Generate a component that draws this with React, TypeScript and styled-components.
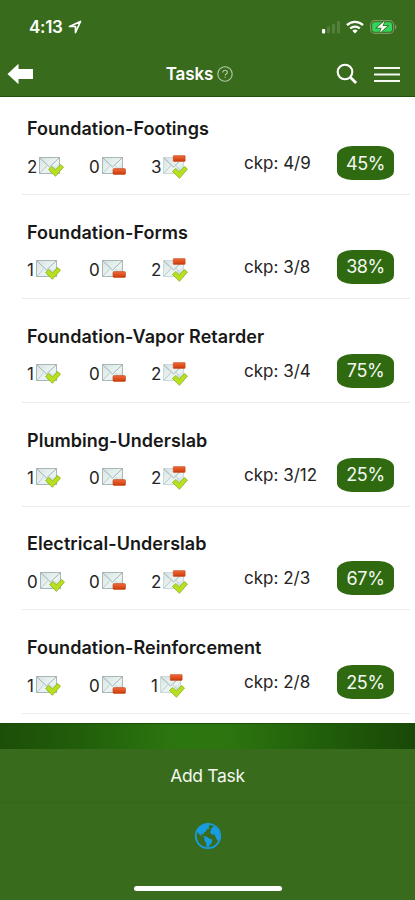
import React from "react";
import styled, { createGlobalStyle } from "styled-components";

const Global = createGlobalStyle`
  * { box-sizing: border-box; }
  body { margin: 0; background: #396b1c; font-family: Inter, "Liberation Sans", sans-serif; }
`;

const Screen = styled.div`
  width: 415px;
  height: 900px;
  display: flex;
  flex-direction: column;
  overflow: hidden;
  background: #396b1c;
`;

const Header = styled.header`
  height: 97px;
  flex: none;
  color: #fff;
  border-bottom: 1px solid #1f5408;
`;

const StatusBar = styled.div`
  height: 52px;
  padding: 2px 18px 0 29px;
  display: flex;
  align-items: center;
  justify-content: space-between;
`;

const Clock = styled.div`
  display: flex;
  align-items: center;
  gap: 5px;
  font-size: 17px;
  font-weight: 600;
  letter-spacing: -0.3px;
`;

const Signals = styled.div`
  display: flex;
  align-items: center;
  gap: 6px;
  svg { display: block; }
`;

const NavBar = styled.nav`
  height: 44px;
  padding: 0 15px 0 7px;
  display: grid;
  grid-template-columns: 64px 1fr 64px;
  align-items: center;
  svg { display: block; }
`;

const NavTitle = styled.h1`
  margin: 0;
  padding-right: 8px;
  display: flex;
  align-items: center;
  justify-content: center;
  gap: 4px;
  font-size: 17px;
  line-height: 22px;
  font-weight: 600;
  letter-spacing: -0.1px;
`;

const NavActions = styled.div`
  display: flex;
  align-items: center;
  justify-content: space-between;
`;

const TaskList = styled.main`
  flex: none;
  height: 626px;
  background: #fff;
`;

const TaskRow = styled.section`
  height: 103.85px;
  margin-left: 22px;
  margin-right: 5px;
  padding: 0 0 13px 5px;
  display: flex;
  flex-direction: column;
  justify-content: flex-end;
  border-bottom: 1px solid #ececec;
  color: #181818;
  &:first-child { height: 98px; }
`;

const TaskTitle = styled.h2`
  margin: 0 0 4px;
  font-size: 18px;
  line-height: 24px;
  font-weight: 600;
  letter-spacing: 0.04px;
  white-space: nowrap;
`;

const Stats = styled.div`
  height: 36px;
  display: grid;
  grid-template-columns: 62px 62px 93px 93px 57px;
  align-items: center;
`;

const Count = styled.div`
  display: flex;
  align-items: center;
  padding-top: 7px;
  font-size: 17px;
  line-height: 24px;
  letter-spacing: -0.2px;
  color: #242424;
  svg { display: block; margin-left: 1px; flex: none; }
`;

const Checkpoints = styled.div`
  font-size: 17px;
  line-height: 24px;
  letter-spacing: 0;
  white-space: nowrap;
  color: #242424;
`;

const Percent = styled.div`
  height: 34px;
  border-radius: 15px / 9px;
  background: #2f6a11;
  color: #f4f8f1;
  display: flex;
  align-items: center;
  justify-content: center;
  font-size: 18px;
  letter-spacing: -0.4px;
`;

const Backdrop = styled.div`
  height: 26px;
  flex: none;
  background: linear-gradient(90deg, #1c4e08 0%, #215d0a 18%, #2c760f 42%, #2c750f 55%, #205c0a 80%, #194807 100%);
  border-top: 1px solid #194d08;
`;

const Footer = styled.footer`
  flex: 1;
  display: flex;
  flex-direction: column;
  align-items: center;
  color: #fff;
`;

const AddTask = styled.button`
  width: 100%;
  height: 54px;
  padding: 0;
  border: 0;
  border-bottom: 1px solid #366719;
  background: transparent;
  color: #f4f8f1;
  font: 400 17.5px/54px Inter, "Liberation Sans", sans-serif;
  letter-spacing: -0.3px;
`;

const Globe = styled.div`
  height: 66px;
  display: flex;
  align-items: center;
`;

const HomeIndicator = styled.div`
  width: 148px;
  height: 5px;
  margin-top: 17px;
  border-radius: 3px;
  background: #fff;
`;

type MailKind = "done" | "removed" | "both";

function MailIcon({ kind }: { kind: MailKind }) {
  const dy = kind === "both" ? 2 : 0;
  return (
    <svg width="28" height="26" viewBox="0 0 28 26">
      <defs>
        <linearGradient id="paper" x1="0" y1="0" x2="1" y2="1">
          <stop offset="0" stopColor="#d5e3e2" />
          <stop offset=".6" stopColor="#edf5f4" />
          <stop offset="1" stopColor="#b9d4d4" />
        </linearGradient>
        <linearGradient id="bar" x1="0" y1="0" x2="0" y2="1">
          <stop offset="0" stopColor="#ef6a3c" />
          <stop offset="1" stopColor="#cd3908" />
        </linearGradient>
      </defs>
      <rect x="1.5" y="3.5" width="20" height="16" fill="url(#paper)" stroke={kind === "both" ? "#ccd9d8" : "#a9b8b7"} />
      <path d="M2 4l9.5 9L21 4" fill="none" stroke="#9fb2b2" />
      <path d="M2 19l7-7.5M21 19l-7-7.5" fill="none" stroke="#bccbcb" />
      {kind === "removed" && <rect x="12" y="14.6" width="12.5" height="5.8" rx="1" fill="url(#bar)" stroke="#c3471d" strokeWidth=".6" />}
      {kind === "both" && <rect x="11.2" y="1.6" width="12" height="5.8" rx=".7" fill="url(#bar)" stroke="#c3471d" strokeWidth=".5" />}
      {kind !== "removed" && (
        <path d={`M10.5 ${15.5 + dy}l3.2-3 3.8 3.4 5-5.4 3 2.5-8 9.3z`} fill="#b9e01c" stroke="#93b62a" strokeWidth=".9" strokeLinejoin="round" />
      )}
    </svg>
  );
}

function GlobeIcon() {
  return (
    <svg width="28" height="28" viewBox="0 0 28 28">
      <circle cx="14" cy="14" r="12.2" fill="none" stroke="#179ce0" strokeWidth="1.8" />
      <path
        d="M4 7.5C6 4.200 9.500 2 14 2l1.800 1.600-1.300 1.200 1 1.600-2.600.8-1 2.200-2.200 1 .6 2.200-2.200-.8-1.200 1 1.800 1.600 3-.2 3.800 2.400 2.800 1.200-.8 3.400-2.200 2.200-.6 2.200-2.200-1-.4-3.800-1.800-2.600.2-2.600-4-2L3 9.800z"
        fill="#179ce0"
      />
      <path
        d="M17.500 6.500l2.600-2.600 3.600 3.100 2.200 5-.4 5.200-2.100 1.400-1.700-3.200-1.200-3-2.800.2-1.600-2.400z"
        fill="#179ce0"
      />
    </svg>
  );
}

const tasks = [
  { name: "Foundation-Footings", done: 2, removed: 0, both: 3, ckp: "4/9", pct: 45 },
  { name: "Foundation-Forms", done: 1, removed: 0, both: 2, ckp: "3/8", pct: 38 },
  { name: "Foundation-Vapor Retarder", done: 1, removed: 0, both: 2, ckp: "3/4", pct: 75 },
  { name: "Plumbing-Underslab", done: 1, removed: 0, both: 2, ckp: "3/12", pct: 25 },
  { name: "Electrical-Underslab", done: 0, removed: 0, both: 2, ckp: "2/3", pct: 67 },
  { name: "Foundation-Reinforcement", done: 1, removed: 0, both: 1, ckp: "2/8", pct: 25 },
];

export default function App() {
  return (
    <Screen>
      <Global />
      <Header>
        <StatusBar>
          <Clock>
            4:13
            <svg width="14" height="14" viewBox="0 0 14 14">
              <path d="M1.5 6.5L12.500 1.500 7.500 12.500V6.500z" fill="none" stroke="#fff" strokeWidth="1.7" strokeLinejoin="round" />
            </svg>
          </Clock>
          <Signals>
            <svg width="18" height="14" viewBox="0 0 18 14">
              <rect x="0" y="9" width="3.2" height="4.5" rx="1" fill="#fff" />
              <g fill="#557f3d">
                <rect x="5" y="6.5" width="3" height="7" rx="1" />
                <rect x="10" y="4" width="3" height="9.5" rx="1" />
                <rect x="15" y="1" width="3" height="12.5" rx="1" />
              </g>
            </svg>
            <svg width="18" height="14" viewBox="0 0 18 14">
              <g fill="none" stroke="#fff" strokeWidth="2.3">
                <path d="M1 5.2a11.5 11.5 0 0116 0" />
                <path d="M4.2 8.5a7 7 0 019.6 0" />
              </g>
              <path d="M6.3 10.7a4 4 0 015.400 0L9 13.500z" fill="#fff" />
            </svg>
            <svg width="27" height="14" viewBox="0 0 27 14">
              <rect x=".6" y=".6" width="23" height="12.8" rx="4" fill="none" stroke="#789b66" strokeWidth="1.1" />
              <rect x="2.2" y="2.2" width="19.8" height="9.6" rx="2.4" fill="#32d65c" />
              <path d="M25 4.500c2 1 2 4 0 5z" fill="#789b66" />
              <path d="M14.500 1L7 7.800h4.600L9.800 13l7.500-7h-4.700z" fill="#fff" stroke="#396b1c" strokeWidth="1.6" paintOrder="stroke" />
            </svg>
          </Signals>
        </StatusBar>
        <NavBar>
          <svg width="26" height="22" viewBox="0 0 26 22">
            <path d="M.5 11L11.500.8V6H26v10H11.500v5.200z" fill="#fff" />
          </svg>
          <NavTitle>
            Tasks
            <svg width="16" height="16" viewBox="0 0 16 16" fill="none" stroke="#b5caa9" strokeWidth="1.1">
              <circle cx="8" cy="8" r="7.2" />
              <path d="M5.800 6.400c0-3 4.600-2.900 4.600-.1 0 1.600-2.300 1.700-2.300 3.300M8.100 10.800v1.300" />
            </svg>
          </NavTitle>
          <NavActions>
            <svg width="22" height="22" viewBox="0 0 22 22" fill="none" stroke="#fff">
              <circle cx="9" cy="9" r="7.3" strokeWidth="2.1" />
              <path d="M14.300 14.300l5.800 5.800" strokeWidth="2.8" />
            </svg>
            <svg width="26" height="18" viewBox="0 0 26 18">
              <path d="M0 3h26M0 9.500h26M0 16h26" stroke="#f4f7f2" strokeWidth="2.2" />
            </svg>
          </NavActions>
        </NavBar>
      </Header>
      <TaskList>
        {tasks.map((t) => (
          <TaskRow key={t.name}>
            <TaskTitle>{t.name}</TaskTitle>
            <Stats>
              <Count>{t.done}<MailIcon kind="done" /></Count>
              <Count>{t.removed}<MailIcon kind="removed" /></Count>
              <Count>{t.both}<MailIcon kind="both" /></Count>
              <Checkpoints>ckp: {t.ckp}</Checkpoints>
              <Percent>{t.pct}%</Percent>
            </Stats>
          </TaskRow>
        ))}
      </TaskList>
      <Backdrop />
      <Footer>
        <AddTask>Add Task</AddTask>
        <Globe><GlobeIcon /></Globe>
        <HomeIndicator />
      </Footer>
    </Screen>
  );
}
